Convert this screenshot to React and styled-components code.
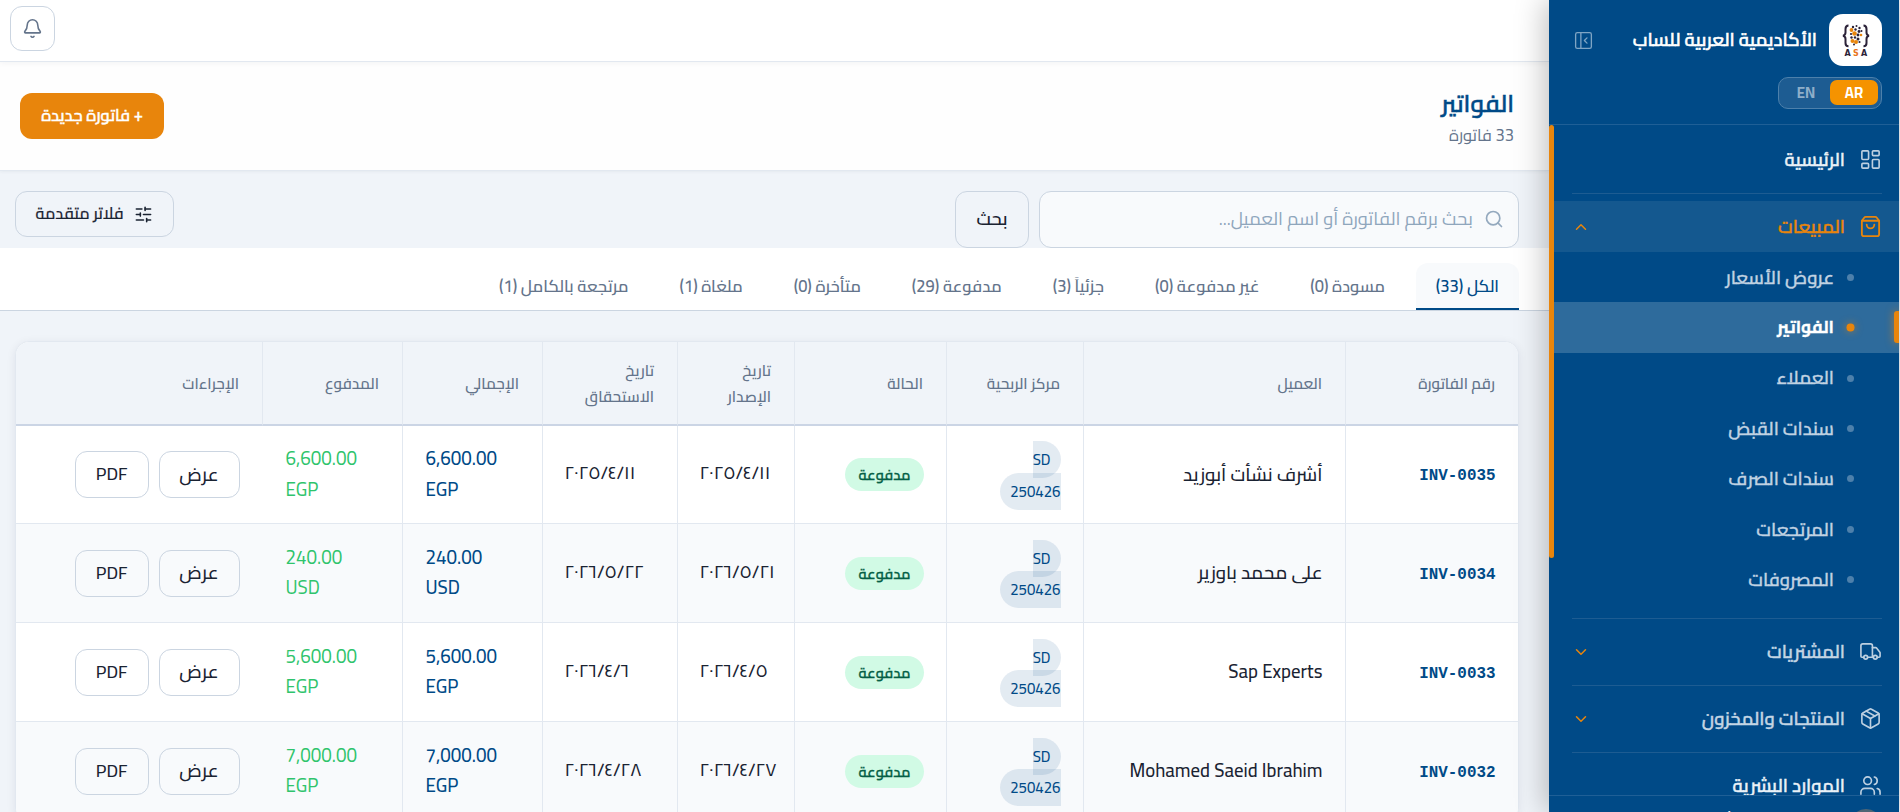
import styled, { createGlobalStyle } from "styled-components";
import {
  Bell,
  ChevronDown,
  ChevronUp,
  LayoutDashboard,
  Package,
  PanelLeftClose,
  Search,
  ShoppingBag,
  SlidersHorizontal,
  Truck,
  Users,
} from "lucide-react";

const SALES_LINKS = [
  { label: "عروض الأسعار" },
  { label: "الفواتير", active: true },
  { label: "العملاء" },
  { label: "سندات القبض" },
  { label: "سندات الصرف" },
  { label: "المرتجعات" },
  { label: "المصروفات" },
];

const TABS = [
  { label: "الكل", count: 33, active: true },
  { label: "مسودة", count: 0 },
  { label: "غير مدفوعة", count: 0 },
  { label: "جزئياً", count: 3 },
  { label: "مدفوعة", count: 29 },
  { label: "متأخرة", count: 0 },
  { label: "ملغاة", count: 1 },
  { label: "مرتجعة بالكامل", count: 1 },
];

const COLUMNS = [
  { label: "رقم الفاتورة", width: 173 },
  { label: "العميل", width: 262 },
  { label: "مركز الربحية", width: 137 },
  { label: "الحالة", width: 152 },
  { label: "تاريخ الإصدار", width: 117 },
  { label: "تاريخ الاستحقاق", width: 135 },
  { label: "الإجمالي", width: 140 },
  { label: "المدفوع", width: 140 },
  { label: "الإجراءات", width: 246 },
];

const INVOICES = [
  { no: "INV-0035", client: "أشرف نشأت أبوزيد", issued: "٢٠٢٥/٤/١١", due: "٢٠٢٥/٤/١١", amount: "6,600.00", currency: "EGP" },
  { no: "INV-0034", client: "على محمد باوزير", issued: "٢٠٢٦/٥/٢١", due: "٢٠٢٦/٥/٢٢", amount: "240.00", currency: "USD" },
  { no: "INV-0033", client: "Sap Experts", issued: "٢٠٢٦/٤/٥", due: "٢٠٢٦/٤/٦", amount: "5,600.00", currency: "EGP" },
  { no: "INV-0032", client: "Mohamed Saeid Ibrahim", issued: "٢٠٢٦/٤/٢٧", due: "٢٠٢٦/٤/٢٨", amount: "7,000.00", currency: "EGP" },
];

// [x, y, radius, orange?] dots of the logo
const LOGO_DOTS = [
  [12, 4, 1.2, 0], [15.5, 3, 1, 0], [18.5, 5, 1.2, 0], [10.5, 7, 1.9, 1], [14.5, 6.5, 1.2, 0],
  [18, 8.5, 1.4, 0], [10, 11, 1.1, 0], [13.5, 10.5, 2.3, 1], [17, 12, 1.4, 0], [20, 12, 1.3, 1],
  [10.5, 14.5, 1.2, 0], [14, 14.5, 1.2, 0], [17, 16, 1.5, 0], [11.5, 18, 2, 1], [15, 19, 2, 1],
  [18.5, 19, 1.1, 0], [20.5, 8, 1, 0], [13, 21.5, 1, 0],
];

function LogoMark() {
  return (
    <svg width="30" height="34" viewBox="0 0 30 34">
      <g fill="none" stroke="#2b2238" strokeWidth="2">
        <path d="M7.500 2.500C5 2.500 4.500 4 4.500 6v3.500c0 1.800-.7 2.800-2.500 3.200 1.800.4 2.500 1.400 2.500 3.200V20c0 2 .5 3.300 3 3.300" />
        <path d="M22.500 2.500c2.500 0 3 1.500 3 3.500v3.500c0 1.800.7 2.800 2.500 3.200-1.800.4-2.500 1.400-2.500 3.200V20c0 2-.5 3.300-3 3.300" />
      </g>
      {LOGO_DOTS.map(([x, y, r, orange]) => (
        <circle key={`${x}-${y}`} cx={x} cy={y} r={r} fill={orange ? "#e8850c" : "#2b2238"} />
      ))}
      <g fontFamily="DejaVu Sans, sans-serif" fontSize="8" fontWeight="700" textAnchor="middle" direction="ltr">
        <text x="6.500" y="33" fill="#2b2238">A</text>
        <text x="15" y="33" fill="#e8741c">S</text>
        <text x="23" y="33" fill="#2b2238">A</text>
      </g>
    </svg>
  );
}

function Sidebar() {
  return (
    <Side>
      <SideHeader>
        <BrandRow>
          <LogoBox>
            <LogoMark />
          </LogoBox>
          <BrandName>الأكاديمية العربية للساب</BrandName>
          <PanelLeftClose size={21} strokeWidth={1.500} color="#7fa5c4" />
        </BrandRow>
        <LangSwitch>
          <Lang $active>AR</Lang>
          <Lang>EN</Lang>
        </LangSwitch>
      </SideHeader>

      <NavArea>
        <Nav>
          <NavItem $bright>
            <LayoutDashboard size={23} strokeWidth={1.700} />
            <NavLabel>الرئيسية</NavLabel>
          </NavItem>
          <Separator />
          <NavItem $active>
            <ShoppingBag size={23} strokeWidth={1.900} />
            <NavLabel>المبيعات</NavLabel>
            <ChevronUp size={18} />
          </NavItem>
          <SubList>
            {SALES_LINKS.map((link) => (
              <SubItem key={link.label} $active={link.active}>
                <Dot $active={link.active} />
                {link.label}
              </SubItem>
            ))}
          </SubList>
          <Separator />
          <NavItem>
            <Truck size={23} strokeWidth={1.700} />
            <NavLabel>المشتريات</NavLabel>
            <ChevronDown size={18} />
          </NavItem>
          <Separator />
          <NavItem>
            <Package size={23} strokeWidth={1.700} />
            <NavLabel>المنتجات والمخزون</NavLabel>
            <ChevronDown size={18} />
          </NavItem>
          <Separator />
          <NavItem $bright>
            <Users size={23} strokeWidth={1.700} />
            <NavLabel>الموارد البشرية</NavLabel>
          </NavItem>
        </Nav>
        <ScrollThumb />
      </NavArea>

      <SideFooter>
        <Avatar />
        <UserName>أحمد</UserName>
      </SideFooter>
    </Side>
  );
}

function InvoiceTable() {
  return (
    <Card>
      <Table>
        <colgroup>
          {COLUMNS.map((col) => (
            <Col key={col.label} $width={col.width} />
          ))}
        </colgroup>
        <thead>
          <tr>
            {COLUMNS.map((col) => (
              <Th key={col.label}>{col.label}</Th>
            ))}
          </tr>
        </thead>
        <tbody>
          {INVOICES.map((inv) => (
            <Row key={inv.no}>
              <Td>
                <InvoiceNo>{inv.no}</InvoiceNo>
              </Td>
              <Td>{inv.client}</Td>
              <Td>
                <CenterWrap>
                  <CostCenter>SD 250426</CostCenter>
                </CenterWrap>
              </Td>
              <Td>
                <Badge>مدفوعة</Badge>
              </Td>
              <Td $ltr>
                <DateText>{inv.issued}</DateText>
              </Td>
              <Td $ltr>
                <DateText>{inv.due}</DateText>
              </Td>
              <Td $ltr>
                <Amount>
                  {inv.amount} {inv.currency}
                </Amount>
              </Td>
              <Td $ltr $plain>
                <Amount $paid>
                  {inv.amount} {inv.currency}
                </Amount>
              </Td>
              <Td $plain>
                <Actions>
                  <RowButton>عرض</RowButton>
                  <RowButton>PDF</RowButton>
                </Actions>
              </Td>
            </Row>
          ))}
        </tbody>
      </Table>
    </Card>
  );
}

export default function App() {
  return (
    <Shell dir="rtl">
      <GlobalStyle />
      <Sidebar />
      <Main>
        <TopBar>
          <BellButton>
            <Bell size={21} strokeWidth={1.800} />
          </BellButton>
        </TopBar>

        <PageHeader>
          <div>
            <Title>الفواتير</Title>
            <Subtitle>33 فاتورة</Subtitle>
          </div>
          <PrimaryButton>+ فاتورة جديدة</PrimaryButton>
        </PageHeader>

        <Toolbar>
          <SearchBox>
            <Search size={20} strokeWidth={2} />
            <SearchInput placeholder="بحث برقم الفاتورة أو اسم العميل..." />
          </SearchBox>
          <SearchButton>بحث</SearchButton>
          <FilterButton>
            <SlidersHorizontal size={19} strokeWidth={2} />
            فلاتر متقدمة
          </FilterButton>
        </Toolbar>

        <Tabs>
          {TABS.map((tab) => (
            <Tab key={tab.label} $active={tab.active}>
              {tab.label} ({tab.count})
            </Tab>
          ))}
        </Tabs>

        <InvoiceTable />
      </Main>
    </Shell>
  );
}

const GlobalStyle = createGlobalStyle`
  * {
    box-sizing: border-box;
  }

  body {
    margin: 0;
    overflow: hidden;
    background: #f0f4f9;
    color: #1a2332;
    font-family: Cairo, "Noto Sans Arabic", "Noto Sans", "DejaVu Sans", sans-serif;
    font-size: 18px;
    line-height: 1.7;
  }

  button,
  input {
    font-family: inherit;
    line-height: inherit;
    color: inherit;
  }
`;

const Shell = styled.div`
  display: flex;
  height: 812px;
  padding-right: 1px;
  overflow: hidden;
`;

// Sidebar
const Side = styled.aside`
  position: relative;
  z-index: 2;
  flex: 0 0 350px;
  display: flex;
  flex-direction: column;
  background: #004a87;
  color: #fff;
  box-shadow: -4px 0 28px rgba(0, 0, 0, 0.25);
`;

const SideHeader = styled.div`
  height: 125px;
  flex-shrink: 0;
  padding: 14px 17px 0 24px;
  border-bottom: 1px solid #1f5f96;
`;

const BrandRow = styled.div`
  display: flex;
  align-items: center;
  height: 52px;
`;

const LogoBox = styled.div`
  display: flex;
  align-items: center;
  justify-content: center;
  width: 53px;
  height: 52px;
  flex-shrink: 0;
  border-radius: 14px;
  background: #fff;
`;

const BrandName = styled.div`
  margin: 0 12px 0 auto;
  white-space: nowrap;
  font-size: 18.400px;
  font-weight: 600;
  -webkit-text-stroke: 0.5px;
`;

const LangSwitch = styled.div`
  display: flex;
  width: 104px;
  height: 32px;
  margin-top: 11px;
  padding: 2px 3px 3px;
  border: 1px solid #4d80ab;
  border-radius: 10px;
  background: #1d5c92;
`;

const Lang = styled.div`
  flex: 1;
  display: flex;
  align-items: center;
  justify-content: center;
  border-radius: 7px;
  background: ${({ $active }) => ($active ? "#f59300" : "transparent")};
  color: ${({ $active }) => ($active ? "#fff" : "#8eaec9")};
  font-size: 15px;
  font-weight: 700;
`;

const NavArea = styled.div`
  flex: 1;
  display: flex;
  min-height: 0;
  overflow: hidden;
`;

const Nav = styled.nav`
  flex: 1;
  padding-top: 9px;
`;

const ScrollThumb = styled.div`
  width: 5px;
  height: 433px;
  border-radius: 3px;
  background: #e8850c;
`;

const NavItem = styled.div`
  display: flex;
  align-items: center;
  gap: 14px;
  height: 51px;
  padding: 0 17px 0 18px;
  background: ${({ $active }) => ($active ? "#14588f" : "transparent")};
  color: ${({ $active, $bright }) => ($active ? "#e8850c" : $bright ? "#eaf1f7" : "#c3d5e4")};

  > svg:first-child {
    color: ${({ $active }) => ($active ? "#e8850c" : "#bdd0e1")};
  }

  > svg:last-child:not(:first-child) {
    color: #e8850c;
  }
`;

const NavLabel = styled.span`
  flex: 1;
  font-size: 18.400px;
  font-weight: 600;
  -webkit-text-stroke: 0.4px;
`;

const Separator = styled.div`
  height: 1px;
  margin: 7.500px 17px 7.500px 18px;
  background: #1d5c92;
`;

const SubList = styled.div`
  padding-bottom: 5px;
`;

const SubItem = styled.div`
  position: relative;
  display: flex;
  align-items: center;
  gap: 13px;
  height: 50.450px;
  padding: 0 45px 0 18px;
  background: ${({ $active }) => ($active ? "#2e6b9c" : "transparent")};
  color: ${({ $active }) => ($active ? "#fff" : "#c0d2e2")};
  font-size: ${({ $active }) => ($active ? 17.2 : 18.4)}px;
  font-weight: ${({ $active }) => ($active ? 700 : 600)};
  -webkit-text-stroke: 0.3px;

  &::after {
    content: "";
    display: ${({ $active }) => ($active ? "block" : "none")};
    position: absolute;
    right: 0;
    top: 9px;
    width: 5px;
    height: 32px;
    border-radius: 3px 0 0 3px;
    background: #e8850c;
    box-shadow: 0 0 8px rgba(232, 133, 12, 0.7);
  }
`;

const Dot = styled.span`
  width: 7px;
  height: 7px;
  border-radius: 50%;
  background: ${({ $active }) => ($active ? "#e8850c" : "#4d80ab")};
  box-shadow: ${({ $active }) => ($active ? "0 0 0 0.5px #e8850c, 0 0 8px rgba(232, 133, 12, 0.8)" : "none")};
`;

const SideFooter = styled.div`
  display: flex;
  height: 17px;
  flex-shrink: 0;
  padding: 13px 17px 0;
  border-top: 1px solid #1f5f96;
  overflow: hidden;
`;

const Avatar = styled.div`
  width: 32px;
  height: 32px;
  flex-shrink: 0;
  border-radius: 50%;
  background: #4f6675;
`;

const UserName = styled.div`
  margin-right: 119px;
  font-size: 15px;
  line-height: 24px;
`;

// Main column
const Main = styled.main`
  flex: 1;
  min-width: 0;
`;

const TopBar = styled.header`
  position: relative;
  display: flex;
  align-items: center;
  justify-content: flex-end;
  height: 62px;
  padding: 0 10px 4px;
  border-bottom: 1px solid #e2e8f0;
  background: #fff;
  box-shadow: 0 1px 6px rgba(0, 30, 60, 0.05);
`;

const BellButton = styled.button`
  display: flex;
  align-items: center;
  justify-content: center;
  width: 45px;
  height: 45px;
  padding: 0;
  border: 1px solid #cbd5e1;
  border-radius: 12px;
  background: #fff;
  color: #64748b;
`;

const PageHeader = styled.section`
  display: flex;
  align-items: center;
  justify-content: space-between;
  height: 109px;
  padding: 0 35px 0 20px;
  border-bottom: 1px solid #e2e8f0;
  background: #fefefe;
  box-shadow: 0 1px 3px rgba(0, 30, 60, 0.05);
`;

const Title = styled.h1`
  margin: 0;
  padding-top: 2px;
  color: #004a87;
  font-size: 24.200px;
  font-weight: 600;
  line-height: 36px;
  -webkit-text-stroke: 0.5px;
`;

const Subtitle = styled.div`
  color: #64748b;
  font-size: 16.500px;
  line-height: 28px;
`;

const PrimaryButton = styled.button`
  width: 144px;
  height: 46px;
  padding: 0;
  border: 0;
  border-radius: 12px;
  background: #e8850c;
  color: #fff;
  font-size: 16.400px;
  font-weight: 600;
  -webkit-text-stroke: 0.4px;
`;

const Toolbar = styled.div`
  display: flex;
  align-items: flex-start;
  gap: 10px;
  height: 77px;
  padding: 20px 30px 0 15px;
`;

const SearchBox = styled.label`
  display: flex;
  align-items: center;
  gap: 11px;
  width: 480px;
  height: 57px;
  padding: 0 14px 1px;
  border: 1px solid #cbd5e1;
  border-radius: 12px;
  background: #f8fafc;
  color: #94a9be;
`;

const SearchInput = styled.input`
  flex: 1;
  min-width: 0;
  padding: 0;
  border: 0;
  outline: 0;
  background: transparent;
  font-size: 18.350px;

  &::placeholder {
    color: #8fa6bc;
    opacity: 1;
  }
`;

const SearchButton = styled.button`
  width: 74px;
  height: 57px;
  padding: 0;
  border: 1px solid #cbd5e1;
  border-radius: 12px;
  background: transparent;
  font-size: 18px;
  font-weight: 600;
`;

const FilterButton = styled.button`
  display: flex;
  align-items: center;
  justify-content: center;
  gap: 11px;
  width: 159px;
  height: 46px;
  margin-right: auto;
  padding: 0;
  border: 1px solid #cbd5e1;
  border-radius: 12px;
  background: transparent;
  font-size: 16.100px;
  font-weight: 500;
  -webkit-text-stroke: 0.2px;
`;

const Tabs = styled.div`
  display: flex;
  align-items: flex-end;
  gap: 10.900px;
  height: 63px;
  padding-right: 30px;
  border-bottom: 1px solid #cbd5e1;
  background: #fff;
`;

const Tab = styled.div`
  height: 47px;
  padding: 0 20px;
  border-bottom: 2px solid ${({ $active }) => ($active ? "#004a87" : "transparent")};
  border-radius: 12px 12px 0 0;
  background: ${({ $active }) => ($active ? "#f8fafc" : "transparent")};
  color: ${({ $active }) => ($active ? "#004a87" : "#64748b")};
  font-size: 16.500px;
  font-weight: 600;
  line-height: 46px;
  white-space: nowrap;
`;

// Table
const Card = styled.section`
  margin: 30px 30px 0 15px;
  border: 1px solid #e2e8f0;
  border-radius: 14px;
  background: #fff;
  box-shadow: 0 2px 10px rgba(0, 30, 60, 0.08);
  overflow: hidden;
`;

const Table = styled.table`
  width: 1502px;
  table-layout: fixed;
  border-collapse: separate;
  border-spacing: 0;
`;

const Col = styled.col`
  width: ${({ $width }) => $width}px;
`;

const Th = styled.th`
  height: 84px;
  padding: 1px 23px 0 22px;
  border-bottom: 2px solid #cbd5e5;
  border-left: 1px solid #e2e8f0;
  background: #f0f4f9;
  color: #64748b;
  font-size: 15.200px;
  font-weight: 600;
  line-height: 26px;
  text-align: right;

  &:last-child {
    border-left: 0;
  }
`;

const Td = styled.td`
  height: 99px;
  padding: 0 22.500px;
  border-bottom: 1px solid #e2e8f0;
  border-left: ${({ $plain }) => ($plain ? "0" : "1px solid #e2e8f0")};
  direction: ${({ $ltr }) => ($ltr ? "ltr" : "rtl")};
  text-align: ${({ $ltr }) => ($ltr ? "left" : "right")};
  white-space: ${({ $ltr }) => ($ltr ? "normal" : "nowrap")};
  font-size: 18.800px;
  font-weight: 500;
`;

const Row = styled.tr`
  &:nth-child(even) {
    background: #f8fafc;
  }

  &:first-child ${Td} {
    height: 98px;
  }
`;

const InvoiceNo = styled.span`
  color: #004a87;
  font-family: "Liberation Mono", monospace;
  font-size: 15.900px;
  font-weight: 700;
`;

const CenterWrap = styled.div`
  width: 70px;
  font-size: 18.300px;
  white-space: normal;
`;

const CostCenter = styled.span`
  padding: 4px 10px;
  border-radius: 999px;
  background: rgba(0, 74, 135, 0.11);
  color: #004a87;
  font-size: 15px;
  font-weight: 500;
`;

const Badge = styled.span`
  display: inline-block;
  padding: 0 13px;
  border-radius: 999px;
  background: #d1fae5;
  color: #065f46;
  font-size: 14.600px;
  font-weight: 600;
  line-height: 33px;
  vertical-align: middle;
  -webkit-text-stroke: 0.3px;
`;

const DateText = styled.div`
  padding-bottom: 2px;
  font-size: 18px;
`;

const Amount = styled.div`
  width: 76px;
  margin-left: 1px;
  color: ${({ $paid }) => ($paid ? "#2fc46c" : "#004a87")};
  font-weight: ${({ $paid }) => ($paid ? 400 : 500)};
  font-size: 18.800px;
  line-height: 30.400px;
`;

const Actions = styled.div`
  display: flex;
  gap: 10px;
`;

const RowButton = styled.button`
  height: 47px;
  padding: 0 20px;
  border: 1px solid #cbd5e1;
  border-radius: 12px;
  background: transparent;
  font-size: 18px;
  font-weight: 500;

  &:first-child {
    width: 81px;
    font-size: 18.800px;
  }
`;
